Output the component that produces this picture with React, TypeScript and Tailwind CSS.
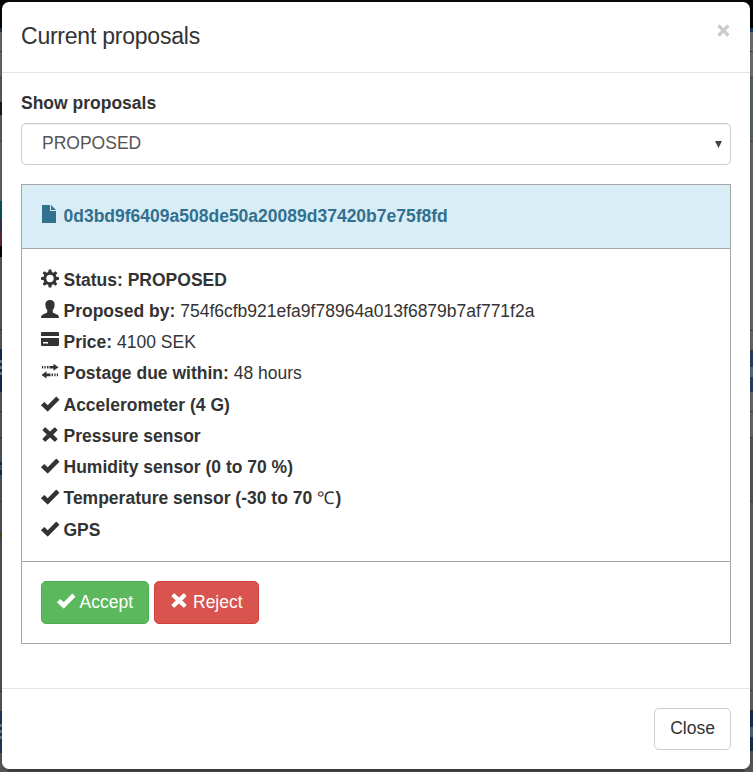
import React from "react";

type IconName = "file" | "cog" | "user" | "card" | "transfer" | "ok" | "remove";

function Icon({ name, className = "" }: { name: IconName; className?: string }) {
  return (
    <svg viewBox="0 0 20 20" fill="currentColor" className={"h-5 w-5 shrink-0 " + className}>
      {name === "file" && <path d="M2 0h8v6h6v12H2zM11 0l5 5h-5z" />}
      {name === "cog" && (
        <path
          fillRule="evenodd"
          d="M8.700 0.500h2.600l.5 2.600 1.500.6 2.200-1.500 1.800 1.800-1.500 2.200.6 1.500 2.600.5v2.600l-2.600.5-.6 1.500 1.500 2.200-1.800 1.800-2.200-1.500-1.500.6-.5 2.600H8.700l-.5-2.600-1.500-.6-2.200 1.500-1.800-1.800 1.500-2.200-.6-1.500L1 10.800V8.200l2.600-.5.6-1.500-1.500-2.200 1.800-1.800 2.200 1.500 1.500-.6zM10 5.800a3.700 3.700 0 1 0 0 7.400 3.700 3.700 0 0 0 0-7.400z"
        />
      )}
      {name === "user" && (
        <path d="M10 0c3.200 0 4.800 2.200 4.600 5.200-.1 2.300-1 3.700-1.900 5v1.700c.1.700 1.100 1.100 2.800 1.900 2.200 1 3.500 1.600 3.500 4.200H1c0-2.600 1.300-3.200 3.500-4.200 1.700-.8 2.700-1.200 2.800-1.900v-1.700c-.9-1.300-1.800-2.700-1.900-5C5.200 2.200 6.800 0 10 0z" />
      )}
      {name === "card" && (
        <path fillRule="evenodd" d="M2 1h16q1 0 1 1v3H1V2q0-1 1-1zM1 7h18v7q0 1-1 1H2q-1 0-1-1zM3 11v1.600h5V11z" />
      )}
      {name === "transfer" && (
        <path d="M2 3.900h1.200v2.700H2zM4.400 3.900h1.300v2.700H4.400zM7 3.900h1.500v2.700H7zM9.500 3.900h4V1.700L18.500 5.200l-5 3.600V6.600h-4zM10.500 11.500h-4V9.300L1.500 12.900l5 3.600v-2.200h4zM11.600 11.500H13v2.800h-1.400zM14.300 11.500h1.300v2.800h-1.300zM16.800 11.500H18v2.800h-1.200z" />
      )}
      {name === "ok" && <path d="M1.200 11 4 8.200q.3-.3.600 0l3.100 3 8.300-8.400q.3-.3.600 0l2.600 2.700q.3.300 0 .6L8.100 17.300q-.4.400-.8 0L1.200 11.600q-.3-.3 0-.6z" />}
      {name === "remove" && (
        <path d="M5.600 2.500 10 6.600 14.400 2.500q.4-.3.800 0L17.300 4.700q.3.400 0 .8L13.200 9.500l4.100 4.100q.3.400 0 .8l-2.100 2.200q-.4.300-.8 0L10 12.400l-4.400 4.200q-.4.300-.8 0l-2.100-2.200q-.3-.4 0-.8L6.800 9.500 2.700 5.500q-.3-.4 0-.8L4.800 2.500q.4-.3.800 0z" />
      )}
    </svg>
  );
}

function Row({ icon, label, children }: { icon: IconName; label: string; children?: React.ReactNode }) {
  return (
    <div className="flex h-[31.25px] items-center">
      <Icon name={icon} className="-ml-px mr-[3.500px] -mt-[3px]" />
      <span className="whitespace-pre">
        <b>{label}</b>
        {children}
      </span>
    </div>
  );
}

// Dimmed slices of the page that show around the dialog.
const leftStrip: [string, string][] = [
  ["h-[28px]", "bg-[#060606]"], ["h-[4px]", "bg-[#1b344b]"], ["h-[19px]", "bg-[#646464]"], ["h-px", "bg-[#3e3e3e]"],
  ["h-[25px]", "bg-[#646464]"], ["h-px", "bg-[#3b4245]"], ["h-[24px]", "bg-[#525c60]"], ["h-[13px]", "bg-[#171a1b]"],
  ["h-[26px]", "bg-[#525c60]"], ["h-px", "bg-[#3e3e3e]"], ["h-[59px]", "bg-[#606060]"], ["h-[17px]", "bg-[#07545b]"],
  ["h-[14px]", "bg-[#35324a]"], ["h-[14px]", "bg-[#5a2834]"], ["h-[11px]", "bg-[#050505]"], ["h-[72px]", "bg-[#555555]"],
  ["h-px", "bg-[#333333]"], ["h-[19px]", "bg-[#555555]"], ["h-[11px]", "bg-[#0e2c4b]"],
  ["h-[3px]", "bg-[#697681]"], ["h-[3px]", "bg-[#0e2c4b]"], ["h-[3px]", "bg-[#697681]"], ["h-[3px]", "bg-[#0e2c4b]"],
  ["h-[3px]", "bg-[#697681]"], ["h-[3px]", "bg-[#0e2c4b]"], ["h-[14px]", "bg-[#0e2c4b]"], ["h-[19px]", "bg-[#555555]"],
  ["h-px", "bg-[#333333]"], ["h-[25px]", "bg-[#555555]"], ["h-px", "bg-[#333333]"], ["h-[24px]", "bg-[#475258]"],
  ["h-[3px]", "bg-[#112f46]"], ["h-[5px]", "bg-[#475258]"], ["h-[5px]", "bg-[#112f46]"], ["h-[26px]", "bg-[#475258]"],
  ["h-px", "bg-[#333333]"], ["h-[29px]", "bg-[#505050]"], ["h-px", "bg-[#244c6c]"], ["h-[6px]", "bg-[#584422]"],
  ["h-[2px]", "bg-[#505050]"], ["h-px", "bg-[#244c6c]"], ["h-[150px]", "bg-[#505050]"], ["h-px", "bg-[#333333]"],
  ["h-[19px]", "bg-[#555555]"], ["h-[13px]", "bg-[#1b3854]"], ["h-[3px]", "bg-[#6c7780]"], ["h-[3px]", "bg-[#1b3854]"],
  ["h-[3px]", "bg-[#6c7780]"], ["h-[3px]", "bg-[#1b3854]"], ["h-[3px]", "bg-[#6c7780]"], ["h-[14px]", "bg-[#1b3854]"],
  ["h-[20px]", "bg-[#555555]"],
];
const rightStrip: [string, string][] = [
  ["h-[28px]", "bg-[#040404]"], ["h-[4px]", "bg-[#1b3a5a]"], ["h-[19px]", "bg-[#6b6b6b]"], ["h-px", "bg-[#3e3e3e]"],
  ["h-[25px]", "bg-[#6b6b6b]"], ["h-px", "bg-[#3b4245]"], ["h-[63px]", "bg-[#566165]"], ["h-px", "bg-[#3e3e3e]"],
  ["h-[188px]", "bg-[#626262]"], ["h-px", "bg-[#3e3e3e]"], ["h-[19px]", "bg-[#646464]"], ["h-[17px]", "bg-[#243f5c]"],
  ["h-[10px]", "bg-[#566678]"], ["h-[15px]", "bg-[#243f5c]"], ["h-[19px]", "bg-[#646464]"], ["h-px", "bg-[#3e3e3e]"],
  ["h-[25px]", "bg-[#646464]"], ["h-px", "bg-[#3e3e3e]"], ["h-[63px]", "bg-[#4d575b]"], ["h-px", "bg-[#3e3e3e]"],
  ["h-[188px]", "bg-[#5c5c5c]"], ["h-px", "bg-[#3e3e3e]"], ["h-[19px]", "bg-[#5c5c5c]"], ["h-[17px]", "bg-[#122e4b]"],
  ["h-[10px]", "bg-[#4b6076]"], ["h-[14px]", "bg-[#122e4b]"], ["h-[21px]", "bg-[#555555]"],
];

function Strip({ parts, className }: { parts: [string, string][]; className: string }) {
  return (
    <div className={"flex flex-col " + className}>
      {parts.map(([h, bg], i) => (
        <div key={i} className={"shrink-0 " + h + " " + bg} />
      ))}
    </div>
  );
}

export default function App() {
  return (
    <div className="relative h-[772px] w-[753px] overflow-hidden bg-[#484848] px-[2px] pt-[2px] font-['Liberation_Sans',Arial,sans-serif] text-[17.5px] leading-[25px] text-[#333]">
      <div className="absolute inset-0 flex justify-between">
        <Strip parts={leftStrip} className="w-[8px]" />
        <div className="flex flex-1 flex-col justify-between">
          <div className="h-[8px] bg-[#0b0a0b]" />
          <div className="h-[10px] bg-[#434343]" />
        </div>
        <Strip parts={rightStrip} className="w-[9px]" />
      </div>

      <div className="relative flex h-[767px] w-[748px] flex-col rounded-[7px] bg-white shadow-[0_1px_3px_rgba(0,0,0,0.2)]">
        <header className="flex h-[71px] shrink-0 items-start justify-between border-b border-[#e5e5e5] pl-[19px] pr-[20px] pt-[18px]">
          <h4 className="text-[23px] leading-[32px] tracking-[-0.230px]">Current proposals</h4>
          <svg viewBox="0 0 13 13" className="mt-[4px] h-[13px] w-[13px]" stroke="#ccc" strokeWidth="3.2">
            <path d="m1.500 1.500 10 10M11.500 1.500l-10 10" />
          </svg>
        </header>

        <main className="flex flex-1 flex-col px-[19px] pt-[18px]">
          <b className="h-[32px]">Show proposals</b>
          <div className="flex h-[42px] shrink-0 items-center justify-between rounded-[5px] border border-[#ccc] pl-[20px] pr-[8px] text-[#555] shadow-[inset_0_1px_1px_rgba(0,0,0,0.075)]">
            <span className="-mt-px">PROPOSED</span>
            <svg viewBox="0 0 7 7" className="h-[7px] w-[7px]">
              <path d="M0 0h7L3.500 7z" fill="#444" />
            </svg>
          </div>

          <section className="mt-[19px] flex h-[460px] shrink-0 flex-col border border-[#a6a6a6]">
            <div className="flex h-[64px] shrink-0 items-center border-b border-[#a6a6a6] bg-[#d9edf7] pl-[19px] text-[#31708f]">
              <Icon name="file" className="-ml-px mr-[3.500px] -mt-[3px]" />
              <b>0d3bd9f6409a508de50a20089d37420b7e75f8fd</b>
            </div>
            <div className="h-[313px] shrink-0 border-b border-[#a6a6a6] pl-[19px] pt-[15.500px]">
              <Row icon="cog" label="Status: PROPOSED" />
              <Row icon="user" label="Proposed by:"> 754f6cfb921efa9f78964a013f6879b7af771f2a</Row>
              <Row icon="card" label="Price:"> 4100 SEK</Row>
              <Row icon="transfer" label="Postage due within:"> 48 hours</Row>
              <Row icon="ok" label="Accelerometer (4 G)" />
              <Row icon="remove" label="Pressure sensor" />
              <Row icon="ok" label="Humidity sensor (0 to 70 %)" />
              <Row icon="ok" label="Temperature sensor (-30 to 70 ">
                <span className="font-['Liberation_Serif',serif] tracking-[1.500px]">℃</span>
                <b>)</b>
              </Row>
              <Row icon="ok" label="GPS" />
            </div>
            <div className="flex gap-[5px] pl-[19px] pt-[19px] text-white">
              <button className="flex h-[43px] w-[108px] items-center rounded-[5px] border border-[#4cae4c] bg-[#5cb85c] pl-[15px]">
                <Icon name="ok" className="-ml-px mr-[3.500px] -mt-[3px]" />
                <span>Accept</span>
              </button>
              <button className="flex h-[43px] w-[105px] items-center rounded-[5px] border border-[#d43f3a] bg-[#d9534f] pl-[15px]">
                <Icon name="remove" className="-ml-px mr-[4px] -mt-[3px]" />
                <span>Reject</span>
              </button>
            </div>
          </section>
        </main>

        <footer className="flex h-[81px] shrink-0 justify-end border-t border-[#e5e5e5] pr-[19px] pt-[19px]">
          <button className="flex h-[42px] w-[77px] items-center justify-center rounded-[5px] border border-[#ccc] bg-white pb-[2px]">
            Close
          </button>
        </footer>
      </div>
    </div>
  );
}
